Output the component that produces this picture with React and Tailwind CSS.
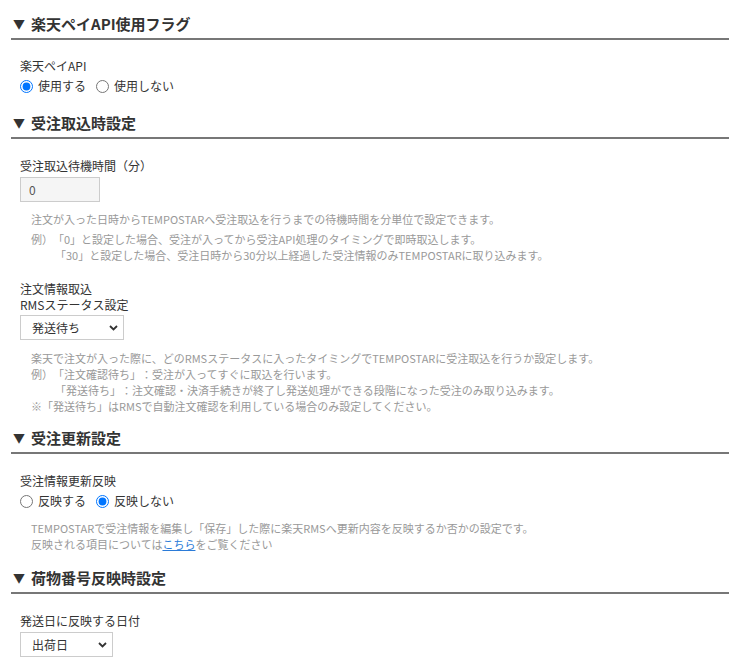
import React from "react";

const font = { fontFamily: '"Noto Sans CJK JP", "Noto Sans", sans-serif' };

const SectionHeading = ({ title }) => (
  <h2 className="flex items-center border-b-2 border-[#777] pb-1 pl-[2px] text-[15px] font-bold leading-5 text-[#333]">
    <span className="mr-[6px] text-[12px]">▼</span>
    <span>{title}</span>
  </h2>
);

const Label = ({ children }) => (
  <div className="text-[12px] leading-5 text-[#333]">{children}</div>
);

const RadioGroup = ({ name, options, checked }) => (
  <div className="flex h-5 items-center text-[12px] text-[#333]">
    {options.map((option) => (
      <label key={option} className="mr-[10px] flex items-center">
        <input
          type="radio"
          name={name}
          defaultChecked={option === checked}
          className="m-0 h-[13px] w-[13px]"
        />
        <span className="ml-[5px]">{option}</span>
      </label>
    ))}
  </div>
);

const Help = ({ children, className = "" }) => (
  <div className={`pl-[11px] text-[11px] leading-4 text-[#999] ${className}`}>
    {children}
  </div>
);

const SelectBox = ({ value, width }) => (
  <div
    className={`flex h-[25px] items-center justify-between border border-[#ccc] bg-white pl-[11px] pr-[5px] text-[12px] text-[#333] ${width}`}
  >
    <span>{value}</span>
    <svg width="9" height="6" viewBox="0 0 9 6" fill="none">
      <path d="M1 1l3.5 3.5L8 1" stroke="#333" strokeWidth="1.8" />
    </svg>
  </div>
);

const App = () => {
  return (
    <div
      className="min-h-[672px] bg-white px-[11px] pt-[14px] [text-spacing-trim:space-all]"
      style={font}
    >
      <section>
        <SectionHeading title="楽天ペイAPI使用フラグ" />
        <div className="px-[9px] pb-[17px] pt-4">
          <Label>楽天ペイAPI</Label>
          <RadioGroup name="rakutenpay" options={["使用する", "使用しない"]} checked="使用する" />
        </div>
      </section>

      <section>
        <SectionHeading title="受注取込時設定" />
        <div className="px-[9px] pb-[14px] pt-[17px]">
          <Label>受注取込待機時間（分）</Label>
          <input
            type="text"
            defaultValue="0"
            className="mt-px block h-[25px] w-20 border border-[#ccc] bg-[#f5f5f5] px-2 text-[12px] text-[#555]"
          />
          <Help className="mt-[9px]">
            注文が入った日時からTEMPOSTARへ受注取込を行うまでの待機時間を分単位で設定できます。
          </Help>
          <Help className="mt-1">
            <div>例）「0」と設定した場合、受注が入ってから受注API処理のタイミングで即時取込します。</div>
            <div className="pl-6">「30」と設定した場合、受注日時から30分以上経過した受注情報のみTEMPOSTARに取り込みます。</div>
          </Help>

          <div className="mt-[18px] text-[12px] leading-4 text-[#333]">
            <div>注文情報取込</div>
            <div>RMSステータス設定</div>
          </div>
          <div className="mt-[2px]">
            <SelectBox value="発送待ち" width="w-[104px]" />
          </div>
          <Help className="mt-[10px]">
            <div>楽天で注文が入った際に、どのRMSステータスに入ったタイミングでTEMPOSTARに受注取込を行うか設定します。</div>
            <div>例）「注文確認待ち」：受注が入ってすぐに取込を行います。</div>
            <div className="pl-6">「発送待ち」：注文確認・決済手続きが終了し発送処理ができる段階になった受注のみ取り込みます。</div>
            <div>※「発送待ち」はRMSで自動注文確認を利用している場合のみ設定してください。</div>
          </Help>
        </div>
      </section>

      <section>
        <SectionHeading title="受注更新設定" />
        <div className="px-[9px] pb-4 pt-[17px]">
          <Label>受注情報更新反映</Label>
          <RadioGroup name="update" options={["反映する", "反映しない"]} checked="反映しない" />
          <Help className="mt-[9px]">
            <div>TEMPOSTARで受注情報を編集し「保存」した際に楽天RMSへ更新内容を反映するか否かの設定です。</div>
            <div>
              反映される項目については
              <a href="#" className="text-[#2b7bd8] underline">こちら</a>
              をご覧ください
            </div>
          </Help>
        </div>
      </section>

      <section>
        <SectionHeading title="荷物番号反映時設定" />
        <div className="px-[9px] pt-[17px]">
          <Label>発送日に反映する日付</Label>
          <div className="mt-px">
            <SelectBox value="出荷日" width="w-[93px]" />
          </div>
        </div>
      </section>
    </div>
  );
};

export default App;
